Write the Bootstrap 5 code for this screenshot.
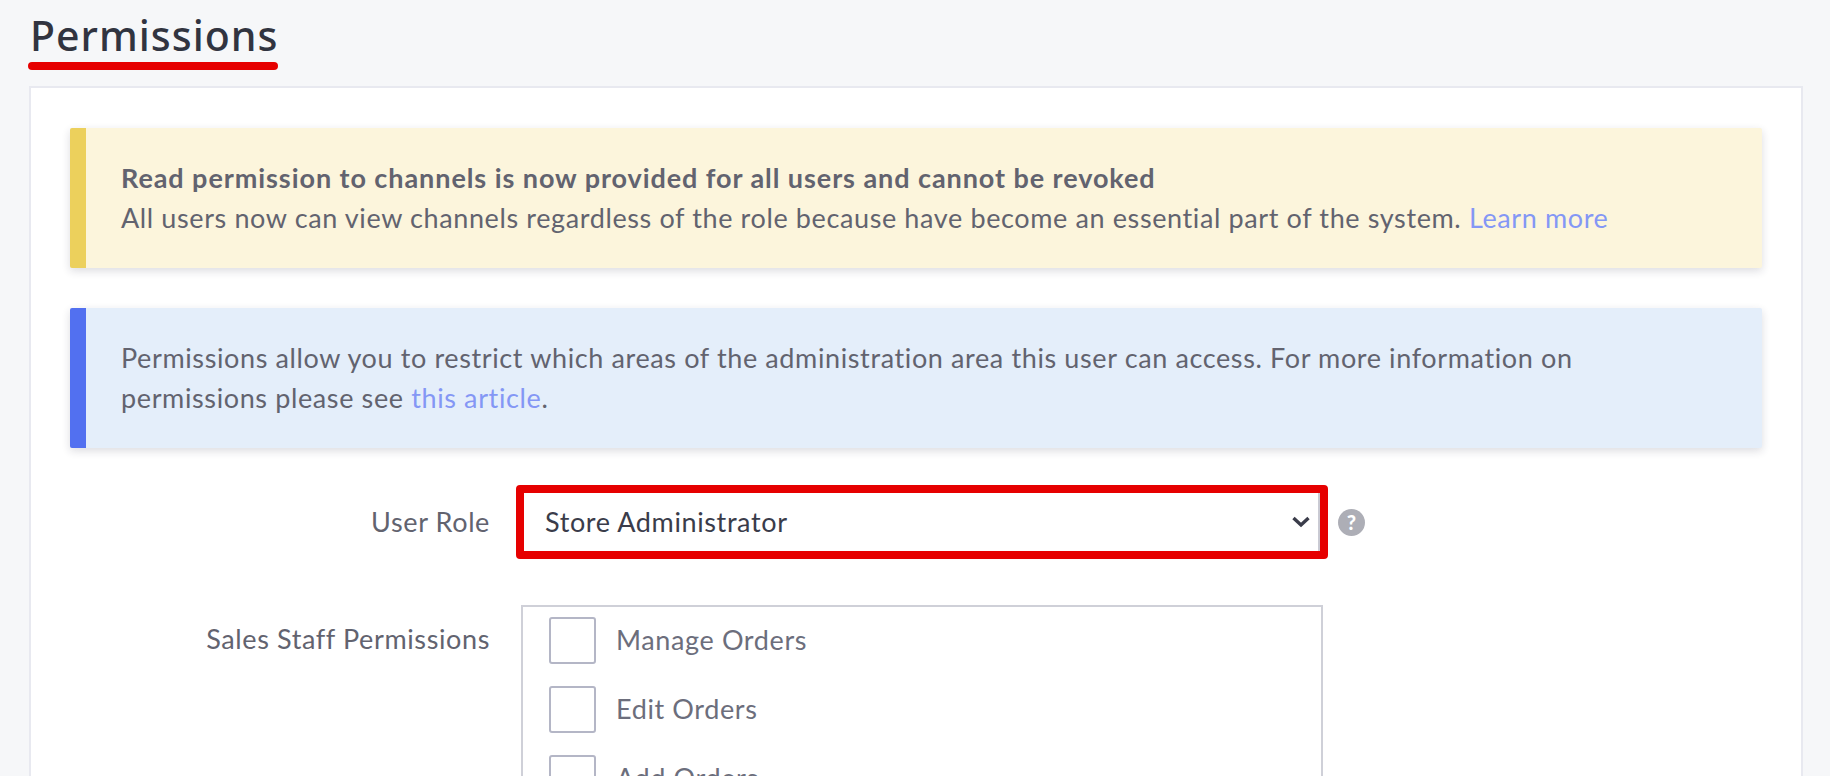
<!DOCTYPE html>
<html lang="en">
<head>
    <meta charset="UTF-8">
    <title>Permissions</title>
    <link href="https://cdn.jsdelivr.net/npm/bootstrap@5.3.3/dist/css/bootstrap.min.css" rel="stylesheet">
    <style>
        html, body { height: 776px; overflow: hidden; }
        body { background: #f6f7f9; font-family: Lato, "Noto Sans", sans-serif; font-size: 27px; letter-spacing: .62px; color: #62636f; }
        a { color: #8497f5; text-decoration: none; }
        .page-wrap { padding: 0 27px 0 29px; }
        .page-title { display: inline-flex; flex-direction: column; margin: 8px 0 16px -1px; }
        .page-title h1 { font-family: "Noto Sans", sans-serif; font-size: 41px; line-height: 54px; font-weight: 500; letter-spacing: 1px; color: #313440; margin: 0 0 0 2px; }
        .title-line { height: 8px; background: #e60000; border-radius: 4px; }
        .panel { background: #fff; border: 2px solid #e8e9f0; border-bottom: 0; padding: 40px 39px 0; height: 700px; }
        .note { height: 140px; padding: 30px 30px 30px 35px; margin-bottom: 40px; line-height: 40px; border-left: 16px solid; border-radius: 2px; box-shadow: 0 3px 8px rgba(40, 40, 60, .16); }
        .note-warn { background: #fcf5dc; border-left-color: #ecd05c; }
        .note-info { background: #e4eefa; border-left-color: #5270f0; margin-bottom: 37px; padding-right: 120px; }
        .note strong { font-weight: 700; letter-spacing: .93px; }
        .form-line { display: flex; }
        .line-label { width: 420px; text-align: right; flex-shrink: 0; line-height: 40px; }
        .role-frame { width: 812px; height: 74px; margin-left: 26px; border: 8px solid #e60000; border-radius: 4px; }
        .role-frame .form-select { height: 58px; font-family: inherit; font-size: 27px; letter-spacing: .62px; color: #3a3c4a; padding: 0 40px 0 21px; border: 0; border-right: 2px solid #c9cad3; border-radius: 0; background-image: url("data:image/svg+xml,%3csvg xmlns='http://www.w3.org/2000/svg' viewBox='0 0 18 12'%3e%3cpath fill='none' stroke='%233a3c4a' stroke-width='3.4' d='M1.5 2l7.5 7 7.5-7'/%3e%3c/svg%3e"); background-position: right 8px center; background-size: 18px 12px; }
        .help-dot { width: 27px; height: 27px; margin-left: 10px; background: #adaeb6; color: #fff; font-size: 20px; font-weight: 900; line-height: 1; letter-spacing: 0; }
        .perm-line { margin-top: 46px; }
        .perm-line .line-label { margin-top: 14px; }
        .perm-box { width: 802px; height: 400px; margin-left: 31px; padding: 10px 26px; border: 2px solid #cfd0d8; }
        .perm-row { display: flex; align-items: center; gap: 20px; height: 47px; margin-bottom: 22px; color: #6c6e7c; }
        .perm-row .form-check-input { width: 47px; height: 47px; margin: 0; border: 2px solid #b4b6c6; border-radius: 3px; flex-shrink: 0; }
    </style>
</head>
<body>
    <div class="page-wrap">
        <div class="page-title">
            <h1>Permissions</h1>
            <div class="title-line"></div>
        </div>

        <div class="panel">
            <div class="note note-warn">
                <strong>Read permission to channels is now provided for all users and cannot be revoked</strong><br>
                All users now can view channels regardless of the role because have become an essential part of the system. <a href="#">Learn more</a>
            </div>
            <div class="note note-info">
                Permissions allow you to restrict which areas of the administration area this user can access. For more information on permissions please see <a href="#">this article</a>.
            </div>

            <div class="form-line align-items-center">
                <label class="line-label" for="userRole">User Role</label>
                <div class="role-frame">
                    <select class="form-select" id="userRole">
                        <option>Store Administrator</option>
                    </select>
                </div>
                <span class="help-dot d-inline-flex align-items-center justify-content-center rounded-circle">?</span>
            </div>

            <div class="form-line perm-line">
                <label class="line-label">Sales Staff Permissions</label>
                <div class="perm-box">
                    <div class="perm-row"><input class="form-check-input" type="checkbox" id="p1"><label for="p1">Manage Orders</label></div>
                    <div class="perm-row"><input class="form-check-input" type="checkbox" id="p2"><label for="p2">Edit Orders</label></div>
                    <div class="perm-row"><input class="form-check-input" type="checkbox" id="p3"><label for="p3">Add Orders</label></div>
                </div>
            </div>
        </div>
    </div>

    <script src="https://cdn.jsdelivr.net/npm/bootstrap@5.3.3/dist/js/bootstrap.bundle.min.js"></script>
</body>
</html>
